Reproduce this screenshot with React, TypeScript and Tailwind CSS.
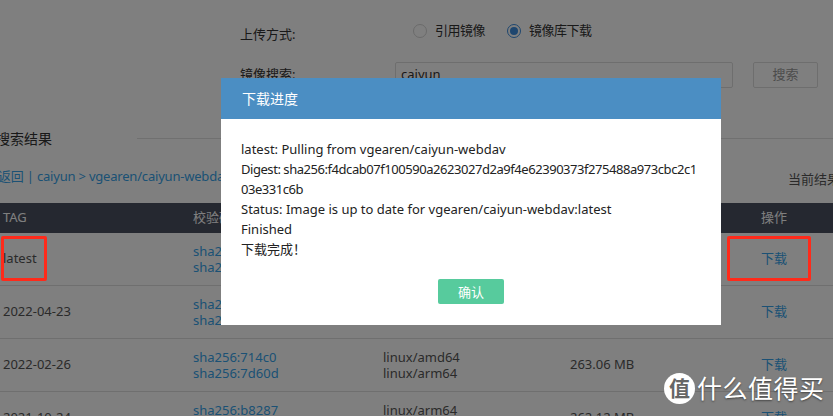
import React from "react";

const font = { fontFamily: '"Noto Sans", "Noto Sans CJK SC", sans-serif' };

interface Row {
  tag: string;
  digests: string[];
  arch: string[];
  size: string;
}

const rows: Row[] = [
  { tag: "latest", digests: ["sha256:f4dca", "sha256:2b91e"], arch: ["linux/amd64", "linux/arm64"], size: "263.06 MB" },
  { tag: "2022-04-23", digests: ["sha256:3c0a1", "sha256:9e72f"], arch: ["linux/amd64", "linux/arm64"], size: "263.06 MB" },
  { tag: "2022-02-26", digests: ["sha256:714c0", "sha256:7d60d"], arch: ["linux/amd64", "linux/arm64"], size: "263.06 MB" },
  { tag: "2021-10-24", digests: ["sha256:b8287", "sha256:0c3a4"], arch: ["linux/arm64", "linux/amd64"], size: "262.12 MB" },
];

const Radio = ({ checked, label }: { checked?: boolean; label: string }) => (
  <label className="flex items-center gap-[8px]">
    <span
      className={`flex h-[14px] w-[14px] items-center justify-center rounded-full border ${
        checked ? "border-[#3c8dde]" : "border-[#d4d4d4]"
      }`}
    >
      {checked && <span className="h-[8px] w-[8px] rounded-full bg-[#3c8dde]" />}
    </span>
    <span className="tracking-[-0.5px]">{label}</span>
  </label>
);

const ResultTable = () => (
  <div className="text-[13px] text-[#555]">
    <div className="flex h-[30px] items-center bg-[#4a5060] text-white">
      <div className="w-[190px] pl-[3px]">TAG</div>
      <div className="w-[190px] pl-[3px]">校验码</div>
      <div className="w-[187px] pl-[3px]">架构</div>
      <div className="w-[148px] pl-[3px]">大小</div>
      <div className="w-[118px] text-center">操作</div>
    </div>
    {rows.map((r) => (
      <div key={r.tag} className="flex h-[53px] items-center border-b border-[#dedede]">
        <div className="w-[190px] pl-[3px]">{r.tag}</div>
        <div className="w-[190px] pl-[3px] leading-[16px] text-[#36a3ea]">
          {r.digests.map((d) => (
            <div key={d}>{d}</div>
          ))}
        </div>
        <div className="w-[187px] pl-[3px] leading-[16px]">
          {r.arch.map((a) => (
            <div key={a}>{a}</div>
          ))}
        </div>
        <div className="w-[148px] pl-[3px]">{r.size}</div>
        <div className="w-[118px] text-center text-[#36a3ea]">下载</div>
      </div>
    ))}
  </div>
);

const ProgressDialog = () => (
  <div className="absolute left-[221px] top-[78px] w-[500px] bg-white">
    <div className="flex h-[41px] items-center bg-[#4b8ec3] px-[21px] text-[14px] text-white">下载进度</div>
    <div className="px-[20px] pb-[21px] pt-[20px] text-[13px] leading-[20px] text-[#222]">
      <div>latest: Pulling from vgearen/caiyun-webdav</div>
      {/* the hash wraps right after "cbc2c1" in the original */}
      <div className="whitespace-nowrap tracking-[-0.45px]">
        Digest: sha256:f4dcab07f100590a2623027d2a9f4e62390373f275488a973cbc2c1
      </div>
      <div className="tracking-[-0.45px]">03e331c6b</div>
      <div>Status: Image is up to date for vgearen/caiyun-webdav:latest</div>
      <div>Finished</div>
      <div>下载完成！</div>
      <div className="mt-[20px] flex justify-center">
        <button className="h-[25px] w-[66px] rounded-[2px] bg-[#57cb9d] text-[13px] text-white">确认</button>
      </div>
    </div>
  </div>
);

export default function App() {
  return (
    <div className="relative h-[416px] w-[833px] overflow-hidden bg-white text-[#333]" style={font}>
      <div className="pl-[240px] pt-[22px] text-[13px]">
        <div className="flex h-[18px] items-center">
          <span className="w-[173px] translate-y-[4px]">上传方式:</span>
          <div className="flex items-center gap-[22px]">
            <Radio label="引用镜像" />
            <Radio checked label="镜像库下载" />
          </div>
        </div>
        <div className="mt-[22px] flex items-center">
          <span className="w-[155px]">镜像搜索:</span>
          <div className="flex h-[26px] w-[338px] items-center rounded-[2px] border border-[#dcdcdc] px-[5px]">caiyun</div>
          <button className="ml-[20px] h-[26px] w-[65px] rounded-[2px] border border-[#dcdcdc] text-[#999]">搜索</button>
        </div>
      </div>

      <div className="mt-[40px] flex items-center">
        <span className="ml-[-4px] w-[141px] text-[14px]">搜索结果</span>
        <div className="h-px flex-1 bg-[#e0e0e0]" />
      </div>

      <div className="mt-[18px] flex items-end justify-between text-[13px]">
        <span className="ml-[-2px] tracking-[-0.2px] text-[#36a3ea]">返回 | caiyun &gt; vgearen/caiyun-webdav</span>
        <span className="mr-[-20px] translate-y-[3px] whitespace-nowrap text-[#555]">当前结果共</span>
      </div>

      <div className="mt-[16px]">
        <ResultTable />
      </div>

      <div className="absolute inset-0 bg-black/50" />

      <ProgressDialog />

      <div className="absolute left-[1px] top-[236px] h-[45px] w-[46px] rounded-[2px] border-[3px] border-[#ff2a1a]" />
      <div className="absolute left-[727px] top-[236px] h-[45px] w-[84px] rounded-[2px] border-[3px] border-[#ff2a1a]" />

      <div className="absolute left-[664px] top-[373px] flex items-center gap-[2px] text-white [text-shadow:0_1px_2px_rgba(0,0,0,0.5)]">
        <span className="flex h-[31px] w-[31px] items-center justify-center rounded-full bg-white text-[21px] font-bold text-[#666] [text-shadow:none]">
          值
        </span>
        <span className="text-[25px] leading-[31px] tracking-[0.5px]">什么值得买</span>
      </div>
    </div>
  );
}
